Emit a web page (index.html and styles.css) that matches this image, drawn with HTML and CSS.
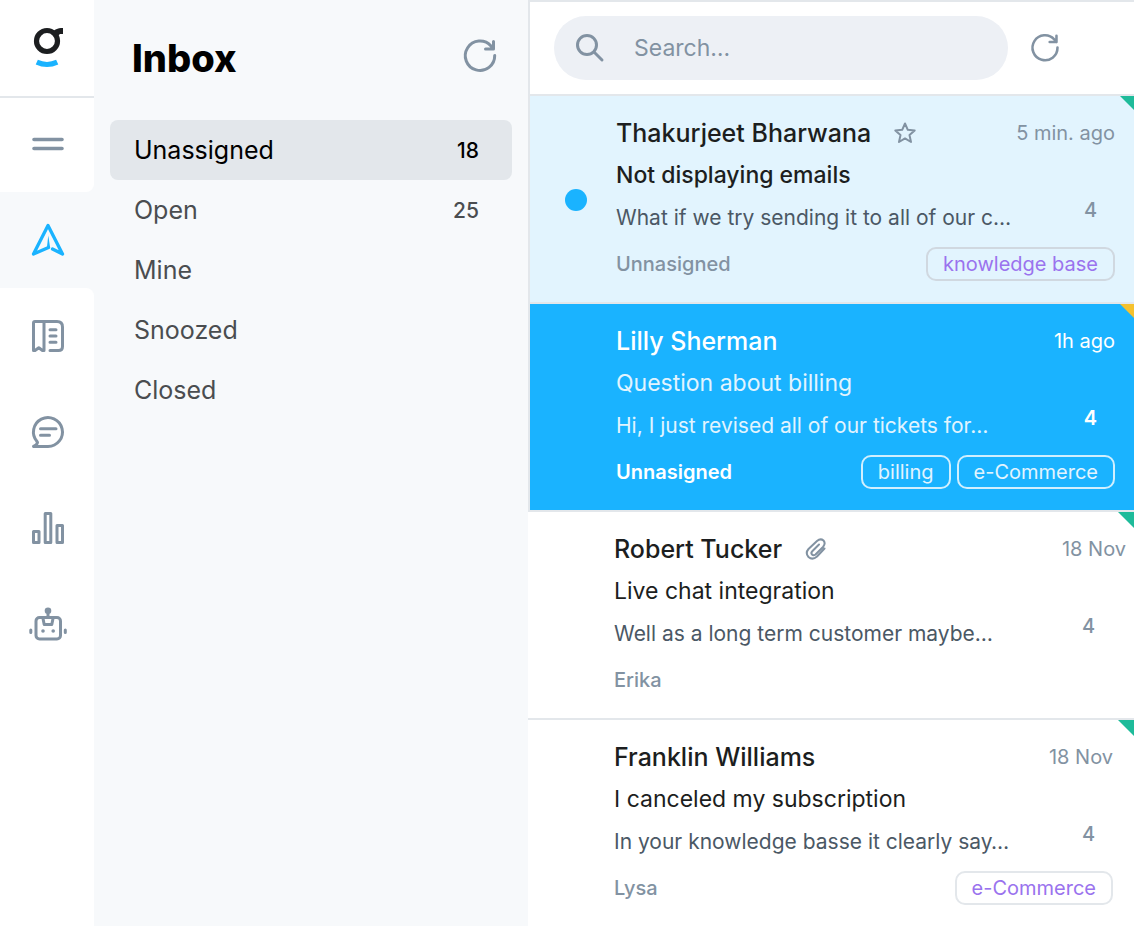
FILE: index.html
```html
<!DOCTYPE html>
<html lang="en">

<head>
    <meta charset="utf-8">
    <meta name="viewport" content="width=device-width, initial-scale=1.0">
    <title>Inbox</title>
    <link rel="stylesheet" href="styles.css">
</head>

<body>
    <div class="app">
        <nav class="rail" aria-label="Main">
            <div class="rail_group rail_top">
                <a class="logo" href="#" aria-label="Home">
                    <svg width="32" height="42" viewBox="0 0 32 42">
                        <circle cx="15" cy="14" r="10.5" fill="none" stroke="#1c1e20" stroke-width="5.200" />
                        <path d="M20.500 5.500C22.500 2.500 25 1 31 1V7H28L24.500 10Z" fill="#1c1e20" />
                        <path d="M4.800 35.200Q15 39.800 25.200 35.200" fill="none" stroke="#1ab3ff" stroke-width="5.200" />
                    </svg>
                </a>
                <button class="rail_item" type="button" aria-label="Menu">
                    <svg class="icon" width="40" height="40" viewBox="0 0 40 40">
                        <path d="M6 14.500H34M6 23.500H34" stroke-width="3.600" />
                    </svg>
                </button>
            </div>
            <a class="rail_item active" href="#" aria-label="Inbox">
                <svg class="icon" width="40" height="40" viewBox="0 0 40 40">
                    <path d="M20.500 27.500L5.500 34L20 5.500L34.500 34L24.500 29" stroke-width="3.300" />
                    <path class="dot" d="M20.300 15.500L22.100 27.500L20.500 29L18.900 27.500Z" />
                </svg>
            </a>
            <div class="rail_group rail_bottom">
                <a class="rail_item" href="#" aria-label="Knowledge base">
                    <svg class="icon" width="40" height="40" viewBox="0 0 40 40">
                        <path d="M22 34.500H30.500Q34.500 34.500 34.500 30.500V11Q34.500 5.500 29 5.500H7Q5.500 5.500 5.500 7V34.500H7L10.800 31.700L14.500 34.500H16V6M22 13.700H28M22 20H28M22 26.300H28" />
                    </svg>
                </a>
                <a class="rail_item" href="#" aria-label="Chat">
                    <svg class="icon" width="40" height="40" viewBox="0 0 40 40">
                        <path d="M5.500 34.500H20A14.500 14.500 0 1 0 9 29.500L9.500 30.500Q9 33 5.500 34.500ZM12.500 16.700H28M12.500 23.300H21.500" />
                    </svg>
                </a>
                <a class="rail_item" href="#" aria-label="Reports">
                    <svg class="icon" width="40" height="40" viewBox="0 0 40 40">
                        <path d="M5.500 23.500H11V34.500H5.500ZM17.200 5.500H22.800V34.500H17.200ZM29 17.500H34.500V34.500H29Z" />
                    </svg>
                </a>
                <a class="rail_item" href="#" aria-label="Bots">
                    <svg class="icon" width="40" height="40" viewBox="0 0 40 40">
                        <rect x="8" y="13.500" width="24.500" height="21.500" rx="3.500" />
                        <path d="M20 7V13M15 14.500L16.200 20.500H23.800L25 14.500M2.800 26V28.500M37.300 26V28.500" />
                        <circle class="dot" cx="20" cy="6.800" r="3.300" />
                        <circle class="dot" cx="15" cy="27" r="1.800" />
                        <circle class="dot" cx="25.200" cy="27" r="1.800" />
                    </svg>
                </a>
            </div>
        </nav>

        <aside class="folders">
            <header>
                <h1>Inbox</h1>
                <button class="refresh" type="button" aria-label="Refresh folders">
                    <svg class="icon" width="40" height="40" viewBox="0 0 40 40">
                        <path d="M34.700 19.500A14.700 14.700 0 1 1 31 10L33.500 13M25.500 13H33.500V5.500" />
                    </svg>
                </button>
            </header>
            <ul>
                <li><a class="folder current" href="#">Unassigned <span>18</span></a></li>
                <li><a class="folder" href="#">Open <span>25</span></a></li>
                <li><a class="folder" href="#">Mine</a></li>
                <li><a class="folder" href="#">Snoozed</a></li>
                <li><a class="folder" href="#">Closed</a></li>
            </ul>
        </aside>

        <main>
            <form class="search">
                <label class="search_box">
                    <svg class="icon" width="32" height="32" viewBox="0 0 32 32">
                        <circle cx="13" cy="13" r="9.500" />
                        <path d="M20 20L28 28" />
                    </svg>
                    <input type="search" placeholder="Search…" aria-label="Search">
                </label>
                <button class="refresh" type="button" aria-label="Refresh tickets">
                    <svg class="icon" width="34" height="34" viewBox="0 0 40 40">
                        <path d="M34.700 19.500A14.700 14.700 0 1 1 31 10L33.500 13M25.500 13H33.500V5.500" />
                    </svg>
                </button>
            </form>

            <article class="ticket unread">
                <div class="line">
                    <h2>Thakurjeet Bharwana</h2>
                    <button class="mark" type="button" aria-label="Star">
                        <svg class="icon" width="24" height="24" viewBox="0 0 24 24">
                            <path d="M12 2.500L14.800 8.800L21.700 9.500L16.500 14.100L18 21L12 17.400L6 21L7.500 14.100L2.300 9.500L9.200 8.800Z" />
                        </svg>
                    </button>
                    <time>5 min. ago</time>
                </div>
                <h3>Not displaying emails</h3>
                <div class="line">
                    <p>What if we try sending it to all of our c…</p>
                    <span class="count">4</span>
                </div>
                <footer>
                    <span class="assignee">Unnasigned</span>
                    <a class="tag" href="#">knowledge base</a>
                </footer>
            </article>

            <article class="ticket selected">
                <div class="line">
                    <h2>Lilly Sherman</h2>
                    <time>1h ago</time>
                </div>
                <h3>Question about billing</h3>
                <div class="line">
                    <p>Hi, I just revised all of our tickets for…</p>
                    <span class="count">4</span>
                </div>
                <footer>
                    <span class="assignee">Unnasigned</span>
                    <a class="tag" href="#">billing</a>
                    <a class="tag" href="#">e-Commerce</a>
                </footer>
            </article>

            <article class="ticket attached">
                <div class="line">
                    <h2>Robert Tucker</h2>
                    <svg class="icon mark" width="24" height="24" viewBox="0 0 24 24">
                        <path d="M20.500 11.500L13 19.500Q8.500 23.500 4.500 20Q1 16 4.500 12L13 4Q16.500 1 19.500 3.500Q22 6.500 19 10L11.500 17.500Q9.500 19 8 17.500Q6.500 16 8.500 14L15 7.500" />
                    </svg>
                    <time>18 Nov</time>
                </div>
                <h3>Live chat integration</h3>
                <div class="line">
                    <p>Well as a long term customer maybe…</p>
                    <span class="count">4</span>
                </div>
                <footer>
                    <span class="assignee">Erika</span>
                </footer>
            </article>

            <article class="ticket">
                <div class="line">
                    <h2>Franklin Williams</h2>
                    <time>18 Nov</time>
                </div>
                <h3>I canceled my subscription</h3>
                <div class="line">
                    <p>In your knowledge basse it clearly say…</p>
                    <span class="count">4</span>
                </div>
                <footer>
                    <span class="assignee">Lysa</span>
                    <a class="tag" href="#">e-Commerce</a>
                </footer>
            </article>
        </main>
    </div>
</body>

</html>
```
FILE: styles.css
```css
* {
    box-sizing: border-box;
}

body {
    margin: 0;
    font-family: 'Inter', sans-serif;
    color: #1c1e20;
    background: white;
}

h1,
h2,
h3,
p,
ul {
    margin: 0;
    padding: 0;
}

ul {
    list-style: none;
}

a {
    color: inherit;
    text-decoration: none;
}

button {
    padding: 0;
    border: 0;
    background: none;
    color: inherit;
    cursor: pointer;
}

svg {
    display: block;
}

.icon {
    fill: none;
    stroke: currentColor;
    stroke-width: 3;
    stroke-linecap: round;
    stroke-linejoin: round;
}

.icon .dot {
    fill: currentColor;
    stroke: none;
}

.app {
    display: flex;
    min-height: 100vh;
    background: #f7f9fb;
}

/* icon rail */
.rail {
    display: flex;
    flex-direction: column;
    flex: 0 0 94px;
    color: #8292a2;
}

.rail_group {
    background: white;
}

.rail_top {
    border-bottom-right-radius: 8px;
}

.rail_bottom {
    flex: 1;
    border-top-right-radius: 8px;
}

.logo {
    display: flex;
    justify-content: center;
    align-items: center;
    height: 98px;
    padding-left: 2px;
    border-bottom: 2px solid #e3e7eb;
}

.rail_item {
    display: flex;
    justify-content: center;
    align-items: center;
    width: 100%;
    height: 96px;
    padding-left: 2px;
}

.rail_top .rail_item {
    height: 94px;
}

.active {
    color: #1ab3ff;
}

/* folders */
.folders {
    flex: 0 0 434px;
    padding: 16px;
}

.folders header {
    display: flex;
    justify-content: space-between;
    align-items: center;
    height: 80px;
    margin-bottom: 24px;
    padding: 0 12px 0 22px;
}

.folders h1 {
    padding-top: 4px;
    font-size: 38px;
    font-weight: 800;
    color: black;
}

.refresh {
    color: #8292a2;
}

.folder {
    display: flex;
    justify-content: space-between;
    align-items: center;
    height: 60px;
    padding: 0 33px 0 24px;
    border-radius: 8px;
    font-size: 25px;
    color: #4a4d50;
}

.folder span {
    font-size: 21px;
    font-weight: 500;
}

.folder.current {
    background: #e3e7eb;
    color: black;
}

/* ticket list */
main {
    flex: 1;
    min-width: 0;
    background: white;
}

.search {
    display: flex;
    align-items: center;
    gap: 20px;
    height: 96px;
    padding: 0 72px 0 24px;
    border: 2px solid #e3e7eb;
    border-right: 0;
}

.search_box {
    display: flex;
    align-items: center;
    gap: 28px;
    flex: 1;
    min-width: 0;
    height: 64px;
    padding: 0 20px;
    border-radius: 32px;
    background: #edf0f5;
    color: #8292a2;
}

.search_box input {
    flex: 1;
    min-width: 0;
    padding: 0;
    border: 0;
    outline: 0;
    background: none;
    font: 23px 'Inter', sans-serif;
    color: #1c1e20;
}

.search_box input::placeholder {
    color: #8292a2;
}

.ticket {
    position: relative;
    overflow: hidden;
    padding: 16px 21px 21px 86px;
    border-bottom: 2px solid #e3e7eb;
}

.ticket:last-child {
    border-bottom: 0;
}

/* priority corner */
.ticket::after {
    content: '';
    position: absolute;
    top: 0;
    right: 0;
    width: 16px;
    height: 16px;
    background: #1ebb9a;
    clip-path: polygon(0 0, 100% 0, 100% 100%);
}

.ticket .line {
    display: flex;
    align-items: center;
    height: 42px;
}

.ticket h2 {
    font-size: 25px;
    font-weight: 500;
}

.ticket h3 {
    font-size: 23px;
    font-weight: 400;
    line-height: 42px;
}

.ticket p {
    font-size: 21px;
    color: #4b5865;
}

.mark {
    margin-left: 22px;
    color: #8292a2;
    stroke-width: 2;
}

.mark .icon {
    stroke-width: 2;
}

.ticket time {
    margin-left: auto;
    font-size: 20px;
    color: #8292a2;
}

.count {
    align-self: flex-start;
    margin-left: auto;
    padding-right: 18px;
    font-size: 20px;
    font-weight: 500;
    line-height: 28px;
    color: #8292a2;
}

.ticket footer {
    display: flex;
    align-items: center;
    gap: 6px;
    height: 34px;
    margin-top: 9px;
}

.assignee {
    margin-right: auto;
    font-size: 20px;
    font-weight: 500;
    color: #8292a2;
}

.tag {
    padding: 0 15px;
    border: 2px solid #e3e7eb;
    border-radius: 10px;
    font-size: 20px;
    line-height: 30px;
    color: #9a73ee;
}

.unread,
.selected {
    padding-right: 19px;
    border-left: 2px solid #e3e7eb;
}

.unread::after,
.selected::after {
    right: -2px;
}

.unread {
    background: #e2f4fe;
}

.unread h3 {
    font-weight: 500;
}

.unread .tag {
    border-color: #d0d8e0;
}

/* unread dot */
.unread::before {
    content: '';
    position: absolute;
    top: 93px;
    left: 35px;
    width: 22px;
    height: 22px;
    border-radius: 50%;
    background: #1ab3ff;
}

.selected {
    background: #1ab3ff;
}

.selected::after {
    background: #f5c12e;
}

.selected h2,
.selected time,
.selected .count,
.selected .assignee {
    color: white;
}

.selected h3,
.selected p,
.selected .tag {
    color: #e2f4fe;
}

.selected .count,
.selected .assignee {
    font-weight: 600;
}

.selected .tag {
    border-color: #d0effe;
}

.attached time {
    margin-right: -13px;
}
```
